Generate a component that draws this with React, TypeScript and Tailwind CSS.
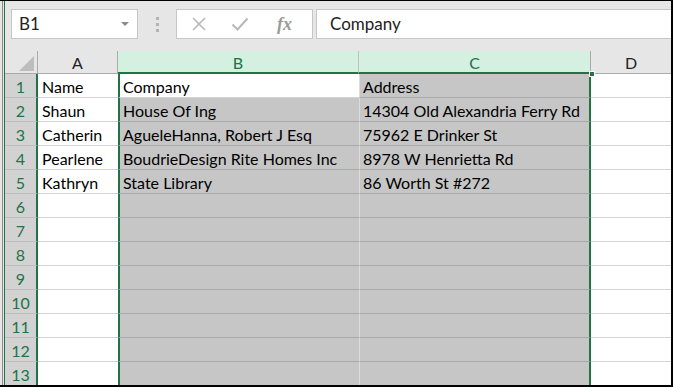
const rows = [
  ["Name", "Company", "Address"],
  ["Shaun", "House Of Ing", "14304 Old Alexandria Ferry Rd"],
  ["Catherin", "AgueleHanna, Robert J Esq", "75962 E Drinker St"],
  ["Pearlene", "BoudrieDesign Rite Homes Inc", "8978 W Henrietta Rd"],
  ["Kathryn", "State Library", "86 Worth St #272"],
  ["", "", ""],
  ["", "", ""],
  ["", "", ""],
  ["", "", ""],
  ["", "", ""],
  ["", "", ""],
  ["", "", ""],
  ["", "", ""],
];

const font = { fontFamily: "Lato, 'Liberation Sans', sans-serif" };

export default function App() {
  return (
    <div
      className="w-[673px] h-[387px] overflow-hidden bg-[#e6e6e6] border-t border-t-black border-r-2 border-r-black border-b-2 border-b-black flex"
      style={font}
    >
      {/* window edge */}
      <div className="flex shrink-0">
        <div className="w-[2px] bg-[#e6e6e6]" />
        <div className="w-px bg-[#8c8c8c]" />
        <div className="w-px bg-[#e6e6e6]" />
        <div className="w-px bg-[#217346]" />
      </div>

      <div className="flex-1 flex flex-col min-w-0">
        {/* formula bar */}
        <div className="h-[50px] shrink-0 flex items-start pt-[8px]">
          <div className="ml-[6px] w-[127px] h-[30px] bg-white border border-[#c6c6c6] flex items-center justify-between pl-[7px] pr-[8px]">
            <span className="text-[17px] text-[#222]">B1</span>
            <div className="w-0 h-0 border-l-[4px] border-r-[4px] border-t-[4px] border-l-transparent border-r-transparent border-t-[#8a8a8a]" />
          </div>
          <div className="w-[38px] h-[30px] flex flex-col items-center justify-center gap-[3px]">
            <div className="w-[3px] h-[3px] bg-[#b4b4b4]" />
            <div className="w-[3px] h-[3px] bg-[#b4b4b4]" />
            <div className="w-[3px] h-[3px] bg-[#b4b4b4]" />
          </div>
          <div className="w-[137px] h-[30px] bg-white border border-[#c6c6c6] flex items-center">
            <svg width="16" height="16" viewBox="0 0 16 16" className="ml-[14px]">
              <path d="M2 2 L14 14 M14 2 L2 14" stroke="#b8b8b8" strokeWidth="1.6" fill="none" />
            </svg>
            <svg width="18" height="16" viewBox="0 0 18 16" className="ml-[24px]">
              <path d="M1.5 8.5 L6.5 13.5 L16.5 2.5" stroke="#b8b8b8" strokeWidth="2" fill="none" />
            </svg>
            <span
              className="ml-[28px] text-[18px] italic font-bold text-[#9a9a9a] leading-none"
              style={{ fontFamily: "'Liberation Serif', serif" }}
            >
              fx
            </span>
          </div>
          <div className="ml-[3px] flex-1 h-[30px] bg-white border border-[#c6c6c6] border-r-0 flex items-center pl-[13px]">
            <span className="text-[17px] text-[#222]">Company</span>
          </div>
        </div>

        {/* sheet */}
        <div className="relative">
          <div className="grid grid-cols-[33px_80px_241px_232px_80px]">
            {/* column headers */}
            <div className="h-[23px] border-r border-[#ababab] border-b border-b-[#ababab] flex items-end justify-end pr-[3px] pb-[2px]">
              <div className="w-0 h-0" style={{ borderBottom: "15px solid #bdbdbd", borderLeft: "15px solid transparent" }} />
            </div>
            <div className="h-[23px] pt-[2px] border-r border-[#ababab] border-b border-b-[#ababab] flex items-center justify-center text-[16px] text-[#222]">
              A
            </div>
            <div className="h-[23px] pt-[2px] bg-[#d3f0e0] border-r border-[#c0c0c0] border-b-2 border-b-[#217346] flex items-center justify-center text-[16px] text-[#217346]">
              B
            </div>
            <div className="h-[23px] pt-[2px] bg-[#d3f0e0] border-r border-[#ababab] border-b-2 border-b-[#217346] flex items-center justify-center text-[16px] text-[#217346]">
              C
            </div>
            <div className="h-[23px] pt-[2px] border-b border-b-[#ababab] flex items-center justify-center text-[16px] text-[#222]">
              D
            </div>

            {rows.map((r, i) => (
              <Row key={i} n={i + 1} cells={r} />
            ))}
          </div>
          {/* fill handle */}
          <div className="absolute left-[584px] top-[20px] w-[6px] h-[6px] bg-[#217346] border border-white" />
        </div>
      </div>
    </div>
  );
}

function Row({ n, cells }: { n: number; cells: string[] }) {
  const first = n === 1;
  return (
    <>
      <div className="h-[24px] pt-[2px] bg-[#d2d2d2] border-r-2 border-r-[#217346] border-b border-b-[#bdbdbd] flex items-center justify-center text-[16px] text-[#217346]">
        {n}
      </div>
      <div className="h-[24px] pt-[2px] bg-white border-b border-b-[#d4d4d4] flex items-center pl-[4px] text-[16px] text-black whitespace-nowrap">
        {cells[0]}
      </div>
      <div
        className={`h-[24px] pt-[2px] border-l-2 border-l-[#217346] border-b flex items-center pl-[3px] text-[16px] text-black whitespace-nowrap ${
          first ? "bg-white border-b-[#d4d4d4]" : "bg-[#c6c6c6] border-b-[#a8a8a8]"
        }`}
      >
        {cells[1]}
      </div>
      <div className="h-[24px] pt-[2px] bg-[#c6c6c6] border-l border-l-[#dcdcdc] border-r-2 border-r-[#217346] border-b border-b-[#a8a8a8] flex items-center pl-[3px] text-[16px] text-black whitespace-nowrap">
        {cells[2]}
      </div>
      <div className="h-[24px] bg-white border-b border-b-[#d4d4d4]" />
    </>
  );
}
